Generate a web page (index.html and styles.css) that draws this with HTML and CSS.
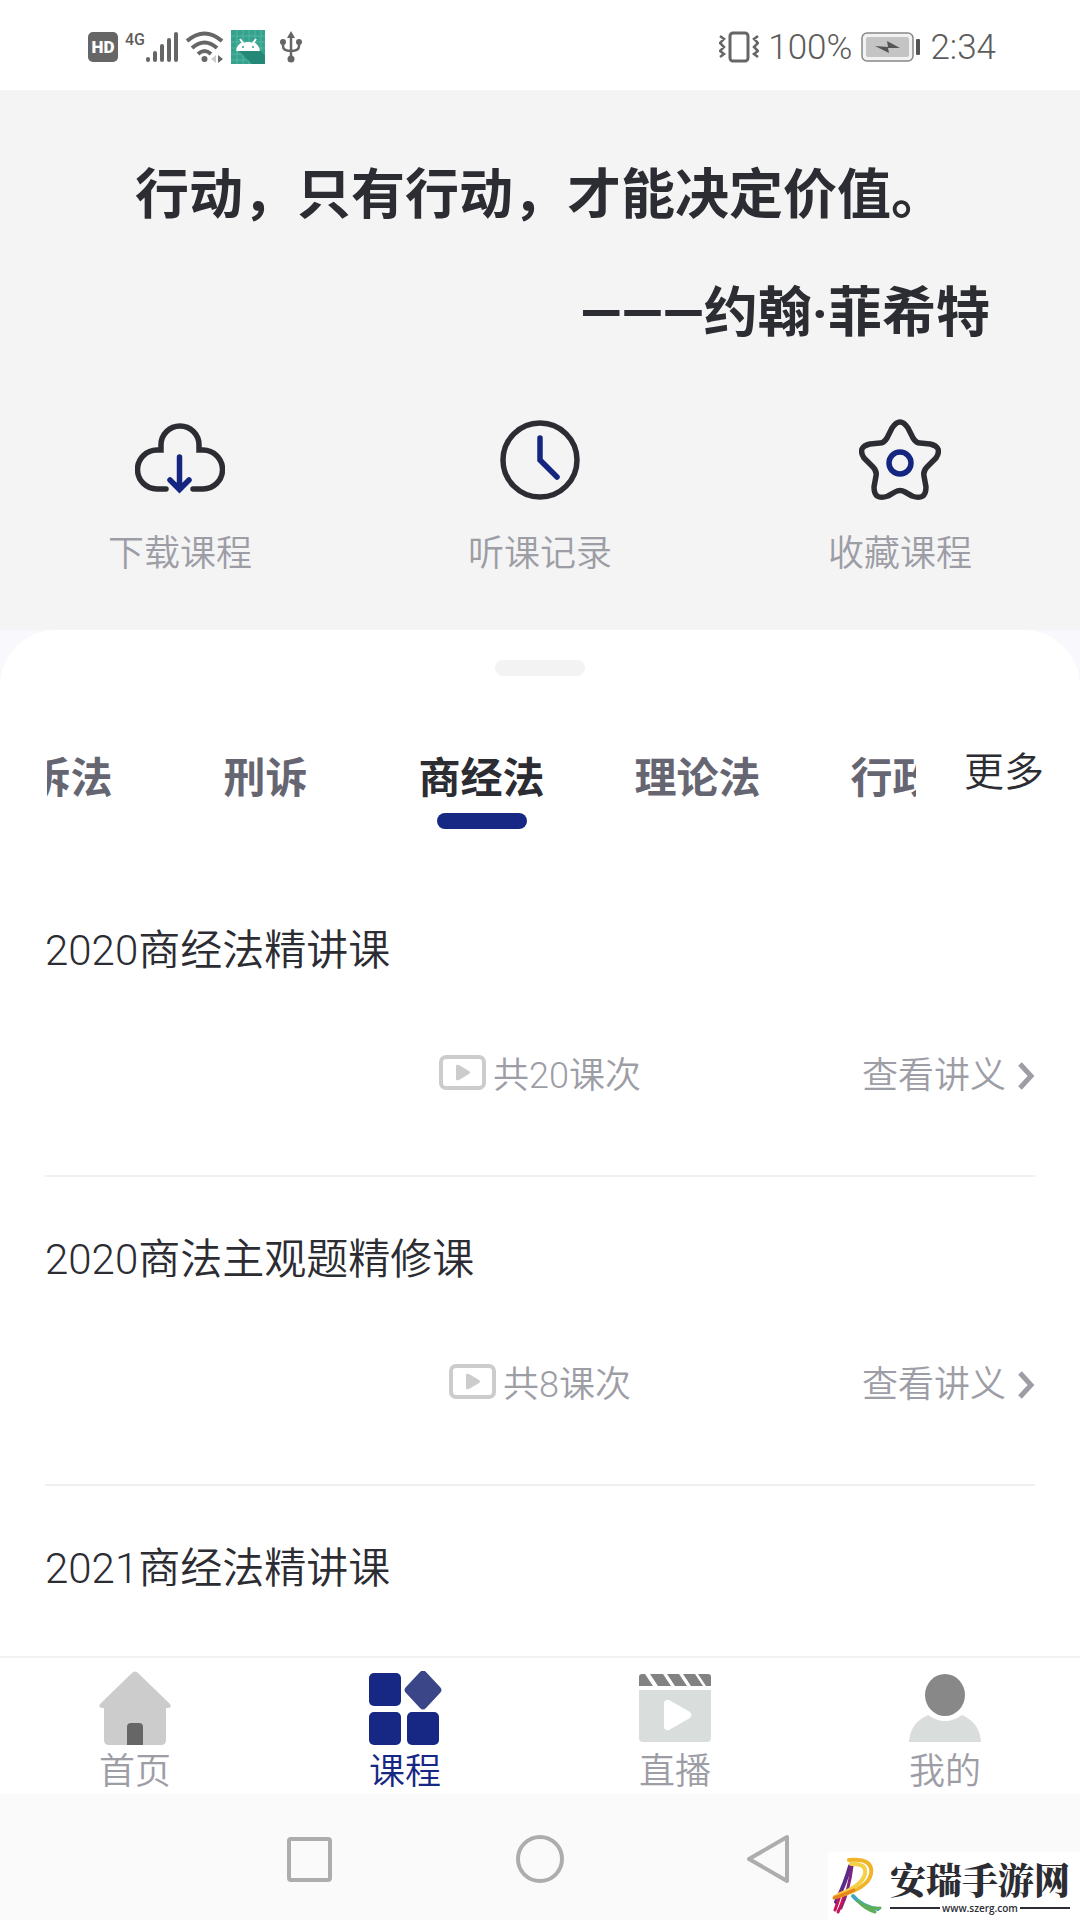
FILE: index.html
```html
<!DOCTYPE html>
<html lang="zh-CN">
  <head>
    <title>课程</title>
    <meta charset="UTF-8">
    <meta name="viewport" content="width=device-width, initial-scale=1">
    <link rel="stylesheet" href="styles.css">
  </head>

  <body>
    <div class="status-bar">
      <div class="status-left">
        <svg width="30" height="30" viewBox="0 0 30 30">
          <rect width="30" height="30" rx="5" fill="#666"/>
          <text class="hd-text" x="15" y="21" text-anchor="middle">HD</text>
        </svg>
        <div class="signal">
          <span class="network">4G</span>
          <svg width="34" height="32" viewBox="0 0 34 32" stroke="#666" stroke-width="4" stroke-linecap="round">
            <path d="M3 28v1M10 22v7M17 15v14M24 9v20M31 3v26"/>
          </svg>
        </div>
        <svg width="38" height="32" viewBox="0 0 38 32" fill="none" stroke="#666" stroke-width="4">
          <path d="M1 10Q18.500 -5 36 10M6 17Q18.500 6 31 17M12 23Q18.500 17 25 23"/>
          <circle cx="18.500" cy="28" r="3" fill="#666" stroke="none"/>
          <path d="M30 24l-5 4 5 4z" fill="#ccc" stroke="none"/>
          <path d="M32 24l5 4-5 4z" fill="#666" stroke="none"/>
        </svg>
        <svg width="34" height="34" viewBox="0 0 34 34">
          <rect width="34" height="34" fill="#35a28d"/>
          <path d="M6 0v34M12 0v34M18 0v34M24 0v34M30 0v34M0 6h34M0 12h34M0 18h34M0 24h34M0 30h34" stroke="#56b5a3" stroke-width="1"/>
          <path d="M8 21l13 13h13V25l-7-7z" fill="#258775"/>
          <path d="M6 21q1-6 6-8l-3-4M28 21q-1-6-6-8l3-4" fill="none" stroke="#fff" stroke-width="2"/>
          <path d="M6 21q2-9 11-9t11 9z" fill="#fff"/>
          <circle cx="12" cy="17" r="1" fill="#35a28d"/>
          <circle cx="22" cy="17" r="1" fill="#35a28d"/>
        </svg>
        <svg class="usb" width="22" height="32" viewBox="0 0 22 32" fill="none" stroke="#666" stroke-width="2.500">
          <path d="M11 4v24M3 11v4q0 5 8 5q8 0 8-5v-4"/>
          <path d="M11 0l4 7H7z" fill="#666" stroke="none"/>
          <circle cx="3" cy="11" r="3" fill="#666" stroke="none"/>
          <circle cx="19" cy="11" r="3" fill="#666" stroke="none"/>
          <circle cx="11" cy="28" r="3.500" fill="#666" stroke="none"/>
        </svg>
      </div>
      <div class="status-right">
        <svg width="40" height="32" viewBox="0 0 40 32" fill="none" stroke="#666" stroke-width="3">
          <rect x="11" y="2" width="18" height="28" rx="3"/>
          <path d="M1 5l4 3-4 4 4 4-4 4 4 3-4 3M39 5l-4 3 4 4-4 4 4 4-4 3 4 3" stroke-width="2.500"/>
        </svg>
        <span>100%</span>
        <svg class="battery" width="60" height="30" viewBox="0 0 60 30">
          <rect x="1" y="1" width="51" height="28" rx="5" fill="#f2f2f2" stroke="#888" stroke-width="1.500"/>
          <rect x="5" y="5" width="43" height="20" rx="2" fill="#c4c4c4"/>
          <path d="M14 14l13 1-1-6 13 7-12 0 1 5z" fill="#555"/>
          <rect x="55" y="7" width="4" height="16" rx="1" fill="#555"/>
        </svg>
        <span>2:34</span>
      </div>
    </div>

    <header class="hero">
      <blockquote class="quote">
        <p>行动，只有行动，才能决定价值。</p>
        <p class="author">———约翰·菲希特</p>
      </blockquote>
      <nav class="shortcuts">
        <a href="#download">
          <svg width="90" height="82" viewBox="0 0 90 82" fill="none" stroke="#2c2c33" stroke-width="5.500" stroke-linecap="round">
            <path d="M31 70H22A19 19 0 0 1 22 31H26V26A19 19 0 0 1 64 26V31H68A19 19 0 0 1 68 70H58"/>
            <path d="M44.500 38V69M35 61l9.500 9.500L54 61" stroke="#14267f"/>
          </svg>
          <span>下载课程</span>
        </a>
        <a href="#history">
          <svg width="82" height="82" viewBox="0 0 82 82" fill="none" stroke="#2c2c33" stroke-width="5.500" stroke-linecap="round">
            <circle cx="41" cy="41" r="37"/>
            <path d="M41 19v22l17 17" stroke="#14267f"/>
          </svg>
          <span>听课记录</span>
        </a>
        <a href="#favorite">
          <svg width="82" height="82" viewBox="0 0 82 82" fill="none" stroke="#2c2c33" stroke-width="5.500" stroke-linejoin="round">
            <path d="M33 9Q41-3 49 9L54 19Q57 24 61 24L71 25Q84 28 77 39L68 48Q64 52 65 57L67 68Q67 82 53 77L46 73Q41 70 36 73L29 77Q15 82 15 68L17 57Q18 52 14 48L5 39Q-2 28 11 25L21 24Q25 24 28 19Z"/>
            <circle cx="41" cy="44" r="11" stroke="#14267f"/>
          </svg>
          <span>收藏课程</span>
        </a>
      </nav>
    </header>

    <div class="sheet-wrap">
      <main class="sheet">
        <div class="handle"></div>
        <div class="tabs-row">
          <div class="tabs">
            <button type="button">民诉法</button>
            <button type="button">刑诉</button>
            <button type="button" class="active">商经法</button>
            <button type="button">理论法</button>
            <button type="button">行政法</button>
          </div>
          <button type="button" class="more">更多</button>
        </div>

        <ul class="course-list">
          <li class="course">
            <h2>2020商经法精讲课</h2>
            <div class="course-meta">
              <div class="lessons">
                <svg width="48" height="36" viewBox="0 0 48 36">
                  <rect x="2" y="2" width="43" height="31" rx="5" fill="none" stroke="#ccc" stroke-width="4"/>
                  <path d="M17 11q0-2 3-1l10 6q2 1.500 0 3l-10 6q-3 1-3-1z" fill="#ccc"/>
                </svg>
                <span>共20课次</span>
              </div>
              <a href="#notes">
                查看讲义
                <svg width="17" height="28" viewBox="0 0 17 28" fill="none" stroke="#9d9da6" stroke-width="5">
                  <path d="M2 2l11 12L2 26"/>
                </svg>
              </a>
            </div>
          </li>
          <li class="course">
            <h2>2020商法主观题精修课</h2>
            <div class="course-meta">
              <div class="lessons">
                <svg width="48" height="36" viewBox="0 0 48 36">
                  <rect x="2" y="2" width="43" height="31" rx="5" fill="none" stroke="#ccc" stroke-width="4"/>
                  <path d="M17 11q0-2 3-1l10 6q2 1.500 0 3l-10 6q-3 1-3-1z" fill="#ccc"/>
                </svg>
                <span>共8课次</span>
              </div>
              <a href="#notes">
                查看讲义
                <svg width="17" height="28" viewBox="0 0 17 28" fill="none" stroke="#9d9da6" stroke-width="5">
                  <path d="M2 2l11 12L2 26"/>
                </svg>
              </a>
            </div>
          </li>
          <li class="course">
            <h2>2021商经法精讲课</h2>
          </li>
        </ul>
      </main>
    </div>

    <nav class="tab-bar">
      <a href="#home">
        <svg width="74" height="74" viewBox="0 0 74 74">
          <path d="M34 2q3-3 6 0l32 31q2 4-2 4h-2v32q0 5-5 5H11q-5 0-5-5V37H4q-4 0-2-4z" fill="#ccc"/>
          <path d="M29 74V56q0-4 4-4h8q4 0 4 4v18z" fill="#666"/>
        </svg>
        <span>首页</span>
      </a>
      <a href="#course" class="current">
        <svg width="74" height="74" viewBox="0 0 74 74" fill="#172784">
          <rect x="1" y="2" width="32" height="33" rx="5"/>
          <rect x="1" y="41" width="32" height="33" rx="5"/>
          <rect x="39" y="41" width="32" height="33" rx="5"/>
          <path d="M52 1q3-3 6 0l14 15q3 3 0 6L58 37q-3 3-6 0L38 22q-3-3 0-6z" fill="#3a4688"/>
        </svg>
        <span>课程</span>
      </a>
      <a href="#live">
        <svg width="74" height="74" viewBox="0 0 74 74">
          <path d="M1 15V6q0-3 3-3h3l8 12zM12 3h13l8 12H20zM29 3h12l8 12H37zM45 3h12l8 12H53zM60 3h10q3 0 3 3v9h-5z" fill="#828282"/>
          <path d="M1 19h72v48q0 4-4 4H5q-4 0-4-4z" fill="#d9dddb"/>
          <path d="M26 32q1-4 5-3l21 12q3 3 0 6L31 59q-4 1-5-3z" fill="#fff"/>
        </svg>
        <span>直播</span>
      </a>
      <a href="#me">
        <svg width="74" height="74" viewBox="0 0 74 74">
          <path d="M1 71q1-19 19-27q17 12 34 0q18 8 19 27z" fill="#d9dddb"/>
          <ellipse cx="37" cy="24" rx="20" ry="21" fill="#888"/>
        </svg>
        <span>我的</span>
      </a>
    </nav>

    <div class="system-nav">
      <button type="button" aria-label="最近任务">
        <svg width="50" height="50" viewBox="0 0 50 50" fill="none" stroke="#adadad" stroke-width="4">
          <rect x="4" y="5" width="41" height="41" rx="2"/>
        </svg>
      </button>
      <button type="button" aria-label="主屏幕">
        <svg width="50" height="50" viewBox="0 0 50 50" fill="none" stroke="#adadad" stroke-width="4">
          <circle cx="25" cy="25" r="22"/>
        </svg>
      </button>
      <button type="button" aria-label="返回">
        <svg width="50" height="50" viewBox="0 0 50 50" fill="none" stroke="#adadad" stroke-width="4" stroke-linejoin="round">
          <path d="M42 3v44L4 25z"/>
        </svg>
      </button>
    </div>

    <div class="site-mark">
      <svg width="50" height="60" viewBox="0 0 50 60" fill="none" stroke-linecap="round">
        <path d="M18 10Q13 28 4 46" stroke="#5b2a86" stroke-width="4"/>
        <path d="M20 10Q17 34 9 52" stroke="#7d2480" stroke-width="3"/>
        <path d="M9 36Q6 46 3 54M13 36Q10 48 6 56" stroke="#c2185b" stroke-width="3"/>
        <path d="M17 4Q42 2 39 18Q36 33 3 41" stroke="#f0b429" stroke-width="4"/>
        <path d="M19 8Q35 7 33 18Q30 30 6 39" stroke="#f5cf45" stroke-width="4"/>
        <path d="M22 34Q8 40 2 42" stroke="#e8841c" stroke-width="3"/>
        <path d="M21 40Q30 51 46 53" stroke="#3fa7c4" stroke-width="4"/>
        <path d="M26 45Q33 53 43 56M32 49Q38 53 48 52" stroke="#5fae57" stroke-width="3"/>
      </svg>
      <div class="site-name">
        <strong>安瑞手游网</strong>
        <small>www.szerg.com</small>
      </div>
    </div>
  </body>
</html>
```
FILE: styles.css
```css
* {
  box-sizing: border-box;
}

body {
  display: flex;
  flex-direction: column;
  position: relative;
  height: 100vh;
  margin: 0;
  overflow: hidden;
  font-family: Roboto, "Noto Sans CJK SC", sans-serif;
  font-weight: 350;
  color: #2c2c33;
  background-color: #fff;
}

a {
  color: inherit;
  text-decoration: none;
}

button {
  padding: 0;
  border: none;
  background: none;
  color: inherit;
  font: inherit;
  cursor: pointer;
}

svg {
  display: block;
  flex: none;
}

/* status bar */
.status-bar {
  display: flex;
  justify-content: space-between;
  align-items: center;
  flex: none;
  height: 90px;
  padding: 4px 84px 0 88px;
  font-size: 35px;
  color: #5c5c5c;
}

.status-left,
.status-right {
  display: flex;
  align-items: center;
  gap: 7px;
}

.status-right {
  gap: 9px;
}

.signal {
  display: flex;
}

.hd-text {
  font-size: 17px;
  font-weight: 900;
  fill: #fff;
}

.network {
  font-size: 16px;
  line-height: 18px;
  font-weight: 500;
}

.usb {
  margin-left: 8px;
}

/* quote and shortcuts */
.hero {
  flex: none;
  height: 540px;
  padding-top: 64px;
  background-color: #f4f4f4;
}

.quote {
  margin: 0;
  font-size: 54px;
  font-weight: 700;
  line-height: 84px;
  text-align: center;
}

.quote p {
  margin: 0 0 34px;
}

.quote .author {
  margin-bottom: 63px;
  padding-right: 90px;
  text-align: right;
}

.shortcuts {
  display: grid;
  grid-template-columns: repeat(3, 1fr);
}

.shortcuts a {
  display: flex;
  flex-direction: column;
  align-items: center;
  gap: 26px;
  font-size: 36px;
  line-height: 54px;
  color: #9d9da6;
}

/* course sheet */
.sheet-wrap {
  flex: 1;
  min-height: 0;
  background-color: #f8f8fd;
}

.sheet {
  height: 100%;
  padding-top: 30px;
  border-radius: 56px 56px 0 0;
  overflow: hidden;
  background-color: #fff;
}

.handle {
  width: 90px;
  height: 16px;
  margin: 0 auto;
  border-radius: 8px;
  background-color: #f3f3f3;
}

.tabs-row {
  display: flex;
  align-items: flex-start;
  height: 192px;
  padding: 70px 36px 0 47px;
}

.tabs {
  display: flex;
  justify-content: center;
  flex: 1;
  min-width: 0;
  overflow: hidden;
}

.tabs button {
  flex: 0 0 216px;
  font-size: 42px;
  font-weight: 700;
  line-height: 66px;
  color: #666672;
}

.tabs button::after {
  content: "";
  display: block;
  width: 90px;
  height: 16px;
  margin: 1px auto 0;
  border-radius: 8px;
}

.tabs .active {
  color: #2c2c33;
}

.tabs .active::after {
  background-color: #172784;
}

.more {
  margin-left: 48px;
  font-size: 40px;
  line-height: 54px;
}

.course-list {
  margin: 0;
  padding: 0 45px;
  list-style: none;
}

.course {
  padding: 55px 0 75px;
  border-bottom: 2px solid #f0f0f0;
}

.course h2 {
  margin: 0 0 73px;
  font-size: 42px;
  font-weight: 350;
  line-height: 56px;
}

.course-meta {
  display: grid;
  grid-template-columns: 1fr auto 1fr;
  font-size: 36px;
  line-height: 48px;
  color: #9d9da6;
}

.lessons {
  display: flex;
  align-items: center;
  grid-column: 2;
  gap: 6px;
}

.lessons svg {
  margin-bottom: 6px;
}

.course-meta a {
  display: flex;
  justify-content: flex-end;
  align-items: center;
  gap: 12px;
}

/* bottom bars */
.tab-bar {
  display: grid;
  grid-template-columns: repeat(4, 1fr);
  flex: none;
  height: 138px;
  padding-top: 13px;
  border-top: 2px solid #f2f2f2;
  background-color: #fff;
}

.tab-bar a {
  display: flex;
  flex-direction: column;
  align-items: center;
  gap: 4px;
  font-size: 36px;
  line-height: 46px;
  color: #9d9da6;
}

.tab-bar .current {
  color: #172784;
}

.system-nav {
  display: grid;
  grid-template-columns: repeat(3, 1fr);
  justify-items: center;
  align-items: center;
  flex: none;
  height: 126px;
  padding: 4px 18% 0;
  background-color: #fafafa;
}

.site-mark {
  display: flex;
  align-items: center;
  gap: 8px;
  position: absolute;
  right: 0;
  bottom: 0;
  height: 68px;
  padding: 0 10px 0 4px;
  background-color: #fff;
}

.site-name strong {
  display: block;
  font-family: "Noto Serif CJK SC", "Noto Sans CJK SC", serif;
  font-size: 36px;
  font-weight: 900;
  line-height: 44px;
}

.site-name small {
  display: flex;
  align-items: center;
  gap: 2px;
  font-family: "Open Sans", sans-serif;
  font-size: 10px;
  font-weight: 600;
  line-height: 14px;
}

.site-name small::before,
.site-name small::after {
  content: "";
  flex: 1;
  height: 2px;
  background-color: #2c2c33;
}
```
